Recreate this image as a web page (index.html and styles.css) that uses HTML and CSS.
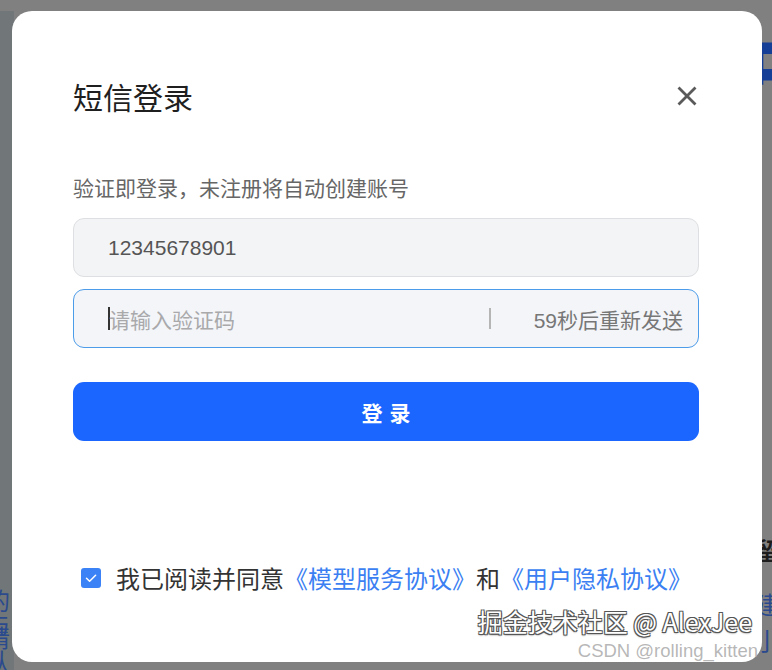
FILE: index.html
```html
<!DOCTYPE html>
<html lang="zh-CN">
<head>
<meta charset="utf-8">
<title>短信登录</title>
<link rel="stylesheet" href="styles.css">
</head>
<body>
<div class="backdrop">
  <div class="bd-left">
    <span class="bd-frag bd-l1">的与</span>
    <span class="bd-frag bd-l2">请认</span>
  </div>
  <div class="bd-right">
    <span class="bd-big">中</span>
    <span class="bd-frag bd-r0">留</span>
    <span class="bd-frag bd-r1">建</span>
    <span class="bd-frag bd-r2">小</span>
  </div>
</div>

<div class="modal">
  <div class="modal-header">
    <h1 class="modal-title">短信登录</h1>
    <button class="close-btn" aria-label="关闭">
      <svg width="20" height="20" viewBox="0 0 20 20"><path d="M2.5 2.5 L17.5 17.5 M17.5 2.5 L2.5 17.5" stroke="#5a5a5a" stroke-width="2.8" stroke-linecap="square" fill="none"/></svg>
    </button>
  </div>

  <p class="hint">验证即登录，未注册将自动创建账号</p>

  <div class="field field-phone">
    <span class="field-value">12345678901</span>
  </div>

  <div class="field field-code">
    <span class="caret"></span>
    <span class="placeholder">请输入验证码</span>
    <span class="divider"></span>
    <span class="countdown">59秒后重新发送</span>
  </div>

  <button class="login-btn">登录</button>

  <div class="agree">
    <span class="checkbox">
      <svg width="20" height="20" viewBox="0 0 20 20"><path d="M5.5 10.2 L8.6 13.2 L14.6 7.2" stroke="#fff" stroke-width="1.5" fill="none" stroke-linecap="round" stroke-linejoin="round"/></svg>
    </span>
    <span class="agree-text">我已阅读并同意<a class="link">《模型服务协议》</a>和<a class="link">《用户隐私协议》</a></span>
  </div>
</div>

<div class="watermark">
  <span class="wm-main">掘金技术社区 @ AlexJee</span>
  <span class="wm-sub">CSDN @rolling_kitten</span>
</div>
</body>
</html>
```

FILE: styles.css
```css
html, body {
  margin: 0;
  padding: 0;
}

body {
  width: 772px;
  height: 670px;
  overflow: hidden;
  background: #808080;
  position: relative;
  font-family: "Liberation Sans", "Noto Sans CJK SC", sans-serif;
}

/* page content seen through the mask */
.backdrop {
  position: absolute;
  inset: 0;
  z-index: 0;
}

.bd-left {
  position: absolute;
  left: 0;
  top: 11px;
  width: 14px;
  height: 659px;
  background: #717778;
  overflow: hidden;
}

.bd-right {
  position: absolute;
  left: 760px;
  top: 0;
  width: 12px;
  height: 670px;
  overflow: hidden;
}

.bd-frag {
  position: absolute;
  font-family: "Noto Sans CJK SC", sans-serif;
  font-size: 24px;
  line-height: 1;
  color: #2b4a8e;
}

.bd-l1 { left: -14px; top: 577px; }
.bd-l2 { left: -14px; top: 614px; }
.bd-r0 { left: -5px; top: 538px; color: #1d1d1d; font-weight: 700; }
.bd-r1 { left: -5px; top: 592px; }
.bd-r2 { left: -5px; top: 628px; }

.bd-big {
  position: absolute;
  left: -15px;
  top: 22px;
  font-family: "Noto Sans CJK SC", sans-serif;
  font-weight: 900;
  font-size: 80px;
  line-height: 1;
  color: #153f96;
}

/* modal */
.modal {
  position: relative;
  z-index: 1;
  box-sizing: border-box;
  width: 750px;
  height: 651px;
  margin: 11px 0 0 12px;
  padding: 65px 63px 69px 61px;
  background: #fff;
  border-radius: 20px;
  display: flex;
  flex-direction: column;
}

.modal-header {
  display: flex;
  align-items: center;
  justify-content: space-between;
  height: 40px;
}

.modal-title {
  margin: 0;
  font-family: "Noto Sans CJK SC", sans-serif;
  font-weight: 400;
  font-size: 30px;
  line-height: 40px;
  color: #1f1f1f;
}

.close-btn {
  border: 0;
  background: none;
  padding: 0;
  margin-right: 2px;
  width: 20px;
  height: 20px;
  display: flex;
}

.hint {
  margin: 56px 0 0;
  font-family: "Noto Sans CJK SC", sans-serif;
  font-size: 21px;
  line-height: 30px;
  color: #666;
}

.field {
  box-sizing: border-box;
  height: 59px;
  border-radius: 11px;
  display: flex;
  align-items: center;
  padding: 0 15px 0 34px;
  font-size: 21px;
}

.field-phone {
  margin-top: 16px;
  background: #f3f4f6;
  border: 1px solid #dedfe2;
}

.field-value {
  color: #555;
  font-family: "Liberation Sans", "Noto Sans CJK SC", sans-serif;
}

.field-code {
  margin-top: 12px;
  background: #f3f5f9;
  border: 1.5px solid #4d9ce9;
}

.caret {
  width: 2px;
  height: 23px;
  background: #333;
  margin-right: -1px;
}

.placeholder {
  font-family: "Noto Sans CJK SC", sans-serif;
  color: #a9a9ab;
  flex: 1;
}

.divider {
  width: 2px;
  height: 21px;
  background: #b5b5b5;
  margin-right: 43px;
}

.countdown {
  font-family: "Liberation Sans", "Noto Sans CJK SC", sans-serif;
  color: #777;
}

.login-btn {
  margin-top: 34px;
  height: 59px;
  border: 0;
  border-radius: 11px;
  background: #1a66ff;
  color: #fff;
  font-family: "Noto Sans CJK SC", sans-serif;
  font-weight: 700;
  font-size: 21px;
  letter-spacing: 7px;
  text-indent: 7px;
}

.agree {
  margin-top: auto;
  display: flex;
  align-items: center;
  padding-left: 8px;
  height: 30px;
}

.checkbox {
  width: 20px;
  height: 20px;
  border-radius: 3px;
  background: #3b82f6;
  display: flex;
  margin-right: 15px;
}

.agree-text {
  font-family: "Noto Sans CJK SC", sans-serif;
  font-size: 24px;
  line-height: 30px;
  color: #333;
  white-space: nowrap;
}

.link {
  color: #3b7ff2;
}

/* watermark */
.watermark {
  position: absolute;
  z-index: 2;
  right: 14px;
  bottom: 8px;
  width: 320px;
  height: 50px;
}

.wm-main {
  position: absolute;
  right: 6px;
  top: -5px;
  font-family: "Noto Sans CJK SC", sans-serif;
  font-size: 25px;
  line-height: 29px;
  color: #fff;
  white-space: nowrap;
  text-shadow: -1px -1px 0 #555, 1px -1px 0 #555, -1px 1px 0 #555, 1px 1px 0 #555, 0 1px 2px #333;
}

.wm-sub {
  position: absolute;
  right: 0;
  top: 29px;
  font-family: "Liberation Sans", sans-serif;
  font-size: 18.5px;
  line-height: 20px;
  color: rgba(160, 160, 160, 0.75);
  white-space: nowrap;
}
```
